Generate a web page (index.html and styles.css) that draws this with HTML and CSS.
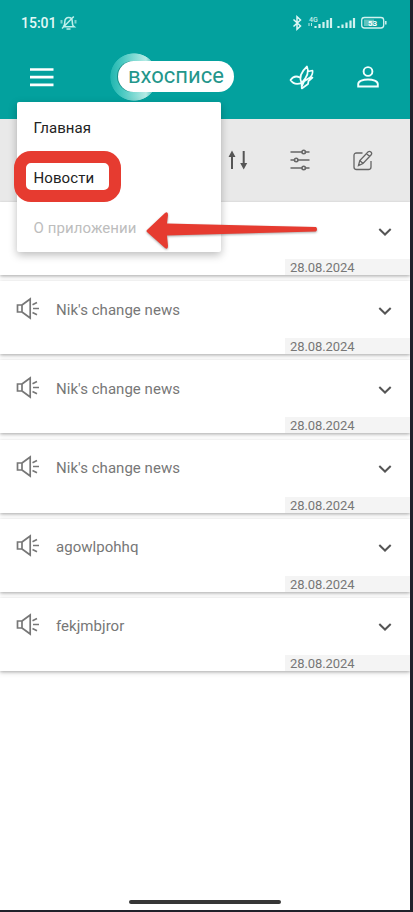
FILE: index.html
```html
<!DOCTYPE html>
<html lang="ru">
<head>
<meta charset="utf-8">
<title>вхосписе</title>
<link rel="stylesheet" href="styles.css">
</head>
<body>
<svg class="defs" aria-hidden="true">
  <symbol id="speaker" viewBox="0 0 24 24"><g fill="none" stroke="#777" stroke-width="1.700"><path d="M1.500 8H6v7H1.500zM6 8 14.200 2v19L6 15"/><path d="M16.500 7.700l4.500-2.200M17 11.500h6M16.500 15.500l4.500 2.200"/></g></symbol>
  <symbol id="chevron" viewBox="0 0 14 10"><path d="M1.300 2 7 7.500 12.700 2" fill="none" stroke="#555" stroke-width="2"/></symbol>
</svg>
<div class="screen">
  <header class="header">
    <div class="status">
      <span class="clock">15:01</span>
      <svg class="bell" viewBox="0 0 17 16" fill="none" stroke="#bff0eb" stroke-width="1.500"><path d="M3 11.700h11c-1.700-1.200-1.700-2.500-1.700-5 0-5.500-7.500-5.500-7.500 0 0 2.500 0 3.800-1.800 5M6.500 14h4M2 13.500 13.800 1.500"/><path d="M1.500 5v3.500M15.500 5v3.500" stroke-width="2" opacity=".65"/></svg>
      <svg class="signals" viewBox="0 0 96 18">
        <path d="M1.500 5.500 8.500 12 5 15.300V2.700L8.500 6 1.500 12.500" fill="none" stroke="#e2f8f6" stroke-width="1.500"/>
        <text x="17" y="7.500">4G</text>
        <path d="M17 9v3M19.500 9v3" stroke="#b9e8e4" stroke-width="1"/>
        <path d="M23.500 11v2M27.500 9v4M31.500 7v6M35.500 5v8M39 3v10M46.500 11v2M50.500 9.500v3.500M54.500 7.500v5.500M58.500 5.500v7.500M62 3v10" transform="translate(0 1)" stroke="#d2f2ef" stroke-width="2.200"/>
        <rect x="69.700" y="3.500" width="22" height="10.500" rx="2.800" fill="none" stroke="#d2f2ef" stroke-width="1.300"/>
        <rect x="72" y="5.500" width="10" height="6.500" fill="#62c4be"/><path d="M93.800 7v3.500" stroke="#d2f2ef" stroke-width="1.500"/>
        <text class="charge" x="76" y="11.700">53</text>
      </svg>
    </div>
    <div class="appbar">
      <svg class="burger" viewBox="0 0 24 19"><path d="M0 1.500h23.500M0 9.200h23.500M0 16.800h23.500" stroke="#fff" stroke-width="2.700"/></svg>
      <div class="logo"><span class="pill">вхосписе</span></div>
      <svg class="butterfly" viewBox="0 0 26 26" fill="none" stroke="#f2fffd" stroke-width="1.700" stroke-linejoin="round"><path d="M12.500 19C9.500 13 12 8 18 2.500 20.500 8 17.500 14 12.500 19M18.800 7.500 23.500 6.500C24 9 23 11.500 21 13.500L12.500 19M21 13.500H23.500L19 17.500M12.500 19 12.800 24.500 19 20 19.500 17M16.500 14.500 13 22M10.800 13.500C7 11.500 4 12.500 1.500 16 4 20 8 20.500 12.500 19"/></svg>
      <svg class="person" viewBox="0 0 22 22" fill="none" stroke="#f2fffd" stroke-width="1.900"><circle cx="11" cy="5.500" r="4.400"/><path d="M1.200 20.500v-2.500c0-6 19.600-6 19.600 0v2.500z"/></svg>
    </div>
  </header>
  <div class="toolbar">
    <svg class="sort" viewBox="0 0 20 20"><path d="M4 19V5M15.700 1v13" stroke="#555" stroke-width="2"/><path d="M4 .5.500 7h7zM15.700 19.500 12.200 13h7z" fill="#555"/></svg>
    <svg class="filter" viewBox="0 0 20 22" fill="none" stroke="#666" stroke-width="1.600"><path d="M.5 3h11.500M15.500 3H19.500M.5 11h4M8 11h11.500M.5 19h11.500M15.500 19h4"/><circle cx="13.700" cy="3" r="1.700"/><circle cx="6.200" cy="11" r="1.700"/><circle cx="13.700" cy="19" r="1.700"/></svg>
    <svg class="edit" viewBox="0 0 20 21" fill="none" stroke="#666" stroke-width="1.300"><path d="M9.500 3H3.500Q1 3 1 5.500v11.500q0 2.500 2.500 2.500h12q2.500 0 2.500-2.500V11"/><path d="M5.500 15.500 6.800 10.500 15.200 1.800q1.300-1 2.700.3t.3 2.700L10 13.500zM13.500 3.500l3 3M6.800 10.500l3.200 3"/></svg>
  </div>
  <main class="feed">
    <article class="card"><svg class="chevron"><use href="#chevron"/></svg><time>28.08.2024</time></article>
    <article class="card"><svg class="speaker"><use href="#speaker"/></svg><h2>Nik's change news</h2><svg class="chevron"><use href="#chevron"/></svg><time>28.08.2024</time></article>
    <article class="card"><svg class="speaker"><use href="#speaker"/></svg><h2>Nik's change news</h2><svg class="chevron"><use href="#chevron"/></svg><time>28.08.2024</time></article>
    <article class="card"><svg class="speaker"><use href="#speaker"/></svg><h2>Nik's change news</h2><svg class="chevron"><use href="#chevron"/></svg><time>28.08.2024</time></article>
    <article class="card"><svg class="speaker"><use href="#speaker"/></svg><h2>agowlpohhq</h2><svg class="chevron"><use href="#chevron"/></svg><time>28.08.2024</time></article>
    <article class="card"><svg class="speaker"><use href="#speaker"/></svg><h2>fekjmbjror</h2><svg class="chevron"><use href="#chevron"/></svg><time>28.08.2024</time></article>
  </main>
  <div class="home"></div>
  <nav class="menu">
    <a class="main">Главная</a>
    <a class="news">Новости</a>
    <a class="about">О приложении</a>
  </nav>
  <div class="frame"></div>
  <svg class="arrow" viewBox="0 0 174 42"><path d="M2 20 20 3q3-2 3 2l-1 8.500 149 3.500q2 2 0 4.500L22 25.500l1 10.500q0 4-3 2L2 22q-1-1 0-2z" fill="#e63b30"/></svg>
</div>
</body>
</html>
```

FILE: styles.css
```css
* { box-sizing: border-box; }
body { margin: 0; background: #20222b; font-family: Roboto, sans-serif; overflow: hidden; }
.defs { position: absolute; width: 0; height: 0; }
svg { display: block; flex: none; }
.screen { position: relative; width: 410px; height: 910px; background: #fff; display: flex; flex-direction: column; overflow: hidden; }
.header { height: 119px; background: #03a19e; flex: none; }
.status { height: 46px; padding: 0 22px 0 21px; display: flex; align-items: center; }
.clock { color: #e2f8f6; font-size: 14px; font-weight: 500; line-height: 16px; }
.bell { width: 17px; height: 16px; margin-left: 3px; }
.signals { width: 96px; height: 18px; margin-left: auto; }
.signals text { font: 500 7px Roboto, sans-serif; fill: #c8efec; }
.signals .charge { font: 700 8px Roboto, sans-serif; fill: #fff; }
.appbar { height: 62px; display: flex; align-items: center; padding: 0 31px 0 30px; }
.burger { width: 24px; height: 19px; }
.logo { width: 124px; height: 48px; margin-left: 56px; padding: 8px 0 9px 8px; background: radial-gradient(circle 24px at 24px 24px, transparent 97%, #03a19e 100%), linear-gradient(90deg, #20b5af 0, #48c8c1 12px, #b5ebe5 36px, #03a19e 49px); }
.pill { display: flex; align-items: center; justify-content: center; height: 31px; border-radius: 16px; background: #fff; box-shadow: -1px 0 0 #168e87; color: #23968b; font-size: 22px; line-height: 26px; padding: 0 0 1px; }
.butterfly { width: 26px; height: 26px; margin-left: 55px; }
.person { width: 22px; height: 22px; margin-left: auto; }
.toolbar { height: 83px; flex: none; background: #e9e9e9; display: flex; align-items: center; justify-content: flex-end; padding: 0 37px 1px 0; }
.sort { width: 20px; height: 20px; }
.filter { width: 20px; height: 22px; margin: 0 43px 0 42px; }
.edit { width: 20px; height: 21px; }
.feed { flex: 1; display: flex; flex-direction: column; gap: 6.2px; }
.card { height: 73px; flex: none; display: grid; grid-template: 57px 16px / 56px 1fr 33px; align-items: center; background: #fff; box-shadow: 0 1px 3px #0004, 0 3px 5px #00000014; }
.speaker { width: 24px; height: 24px; margin: -2px 0 0 16px; }
.card h2 { margin: 0; font-size: 15px; font-weight: 400; letter-spacing: .04px; color: #777; line-height: 20px; }
.chevron { grid-column: 3; width: 14px; height: 10px; margin: 2px 0 0 1px; }
.card time { grid-column: 1 / -1; justify-self: end; width: 125px; height: 16px; padding-left: 5px; background: #f4f4f4; font-size: 13px; line-height: 17px; letter-spacing: -.08px; color: #777; }
.home { position: absolute; left: 129px; bottom: 6px; width: 152px; height: 4px; border-radius: 2px; background: #363636; }
.menu { position: absolute; left: 17px; top: 102px; width: 204px; height: 150px; border-radius: 2px; background: #fff; box-shadow: 0 3px 8px #0004; display: grid; grid-template-rows: repeat(3, 50px); align-items: center; padding: 1px 0 0 16.500px; font-size: 15px; color: #222; }
.menu a { letter-spacing: .08px; }
.menu .about { color: #bdbdbd; }
.frame { position: absolute; left: 14px; top: 151px; width: 107px; height: 51px; border: 12px solid #e63b30; border-radius: 17px; }
.arrow { position: absolute; left: 145px; top: 210px; width: 174px; height: 42px; filter: drop-shadow(0 1px 1px #0005); }
```
